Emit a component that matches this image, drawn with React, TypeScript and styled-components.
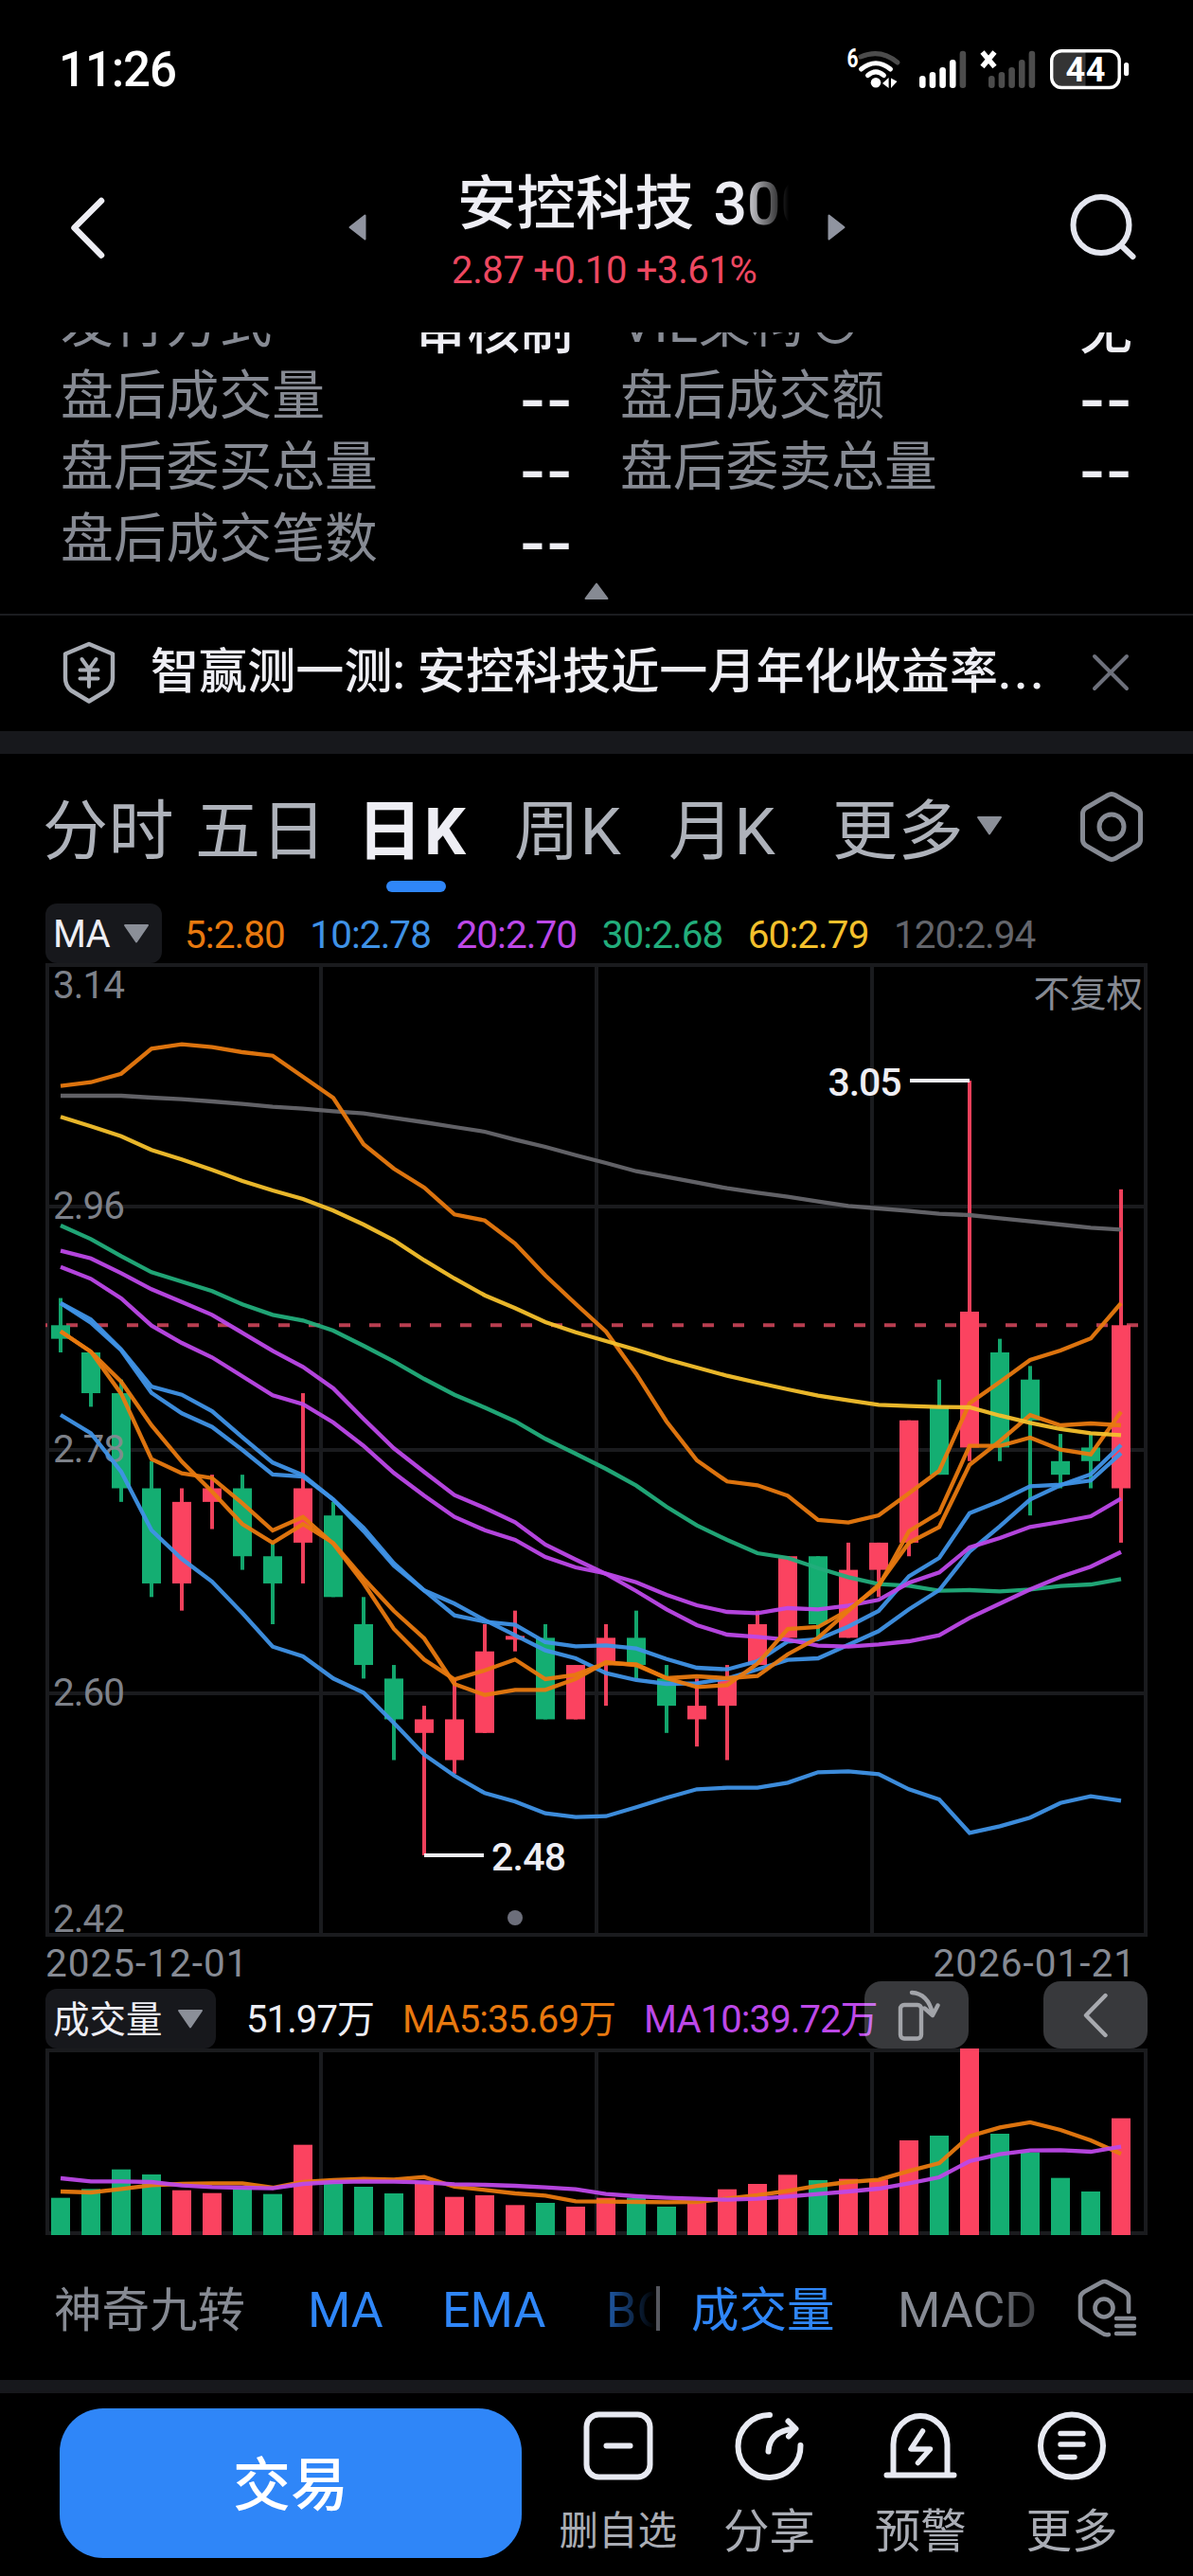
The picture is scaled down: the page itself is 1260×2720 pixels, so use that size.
import React from "react";
import styled, { createGlobalStyle } from "styled-components";

const RED = "#fb4360";
const GREEN = "#14ae72";
const ORANGE = "#e8790f";
const BLUE = "#3f92e6";
const PURPLE = "#bd48e8";
const TEAL = "#22ad7b";
const YELLOW = "#f4c02c";
const SLATE = "#66666c";
const GRID = "#1a1b1e";
const PANEL = "#17181c";
const MUTED = "#868a93";
const BRIGHT = "#eeeef4";
const ACCENT = "#2f86f8";

const FONT = `Roboto, "Noto Sans CJK SC", sans-serif`;

const GlobalStyle = createGlobalStyle`
  * { box-sizing: border-box; }
  body { margin: 0; background: #000; }
`;

const Screen = styled.div`
  width: 1260px;
  height: 2720px;
  overflow: hidden;
  display: flex;
  flex-direction: column;
  background: #000;
  color: ${BRIGHT};
  font-family: ${FONT};
`;

const Svg = styled.svg`
  display: block;
  flex: none;
  text { font-family: ${FONT}; }
`;

const ChartSvg = styled(Svg)`
  margin-left: 48px;
`;

const Label = styled.span<{
  $size: number;
  $color?: string;
  $weight?: number;
  $ls?: number;
  $lh?: number;
  $drop?: number;
}>`
  display: block;
  flex: none;
  white-space: nowrap;
  font-size: ${(p) => p.$size}px;
  color: ${(p) => p.$color || BRIGHT};
  font-weight: ${(p) => p.$weight || 400};
  letter-spacing: ${(p) => p.$ls || 0}px;
  line-height: ${(p) => p.$lh || 60}px;
  padding-top: ${(p) => p.$drop || 0}px;
`;

/* ---------- status bar ---------- */

const StatusRow = styled.header`
  flex: none;
  height: 146px;
  padding: 0 62px 0 62px;
  display: flex;
  align-items: center;
  justify-content: space-between;
`;

const BARS = [79, 75, 70, 62, 52.7];

function Signal({ x, lit }: { x: number; lit: number }) {
  return (
    <g>
      {BARS.map((top, i) => (
        <rect key={i} x={x + i * 10.65} y={top} width={6.6} height={92 - top} rx={3.2} fill={i < lit ? "#fff" : "#4c4c4c"} />
      ))}
    </g>
  );
}

function StatusBar() {
  return (
    <StatusRow>
      <Label $size={51} $weight={500} $ls={-1.1} $drop={2} $color="#fff">11:26</Label>
      <Svg width="310" height="56" viewBox="888 44 310 56">
        <text x="894.5" y="70" fontSize="27" fontWeight="700" textLength="12" lengthAdjust="spacingAndGlyphs" fill="#fff">6</text>
        <path d="M909 59Q930 50 948 65" fill="none" stroke="#4c4c4c" strokeWidth="5" strokeLinecap="round" />
        <path d="M909.5 72Q925 59.5 940.5 72" fill="none" stroke="#fff" strokeWidth="5" strokeLinecap="round" />
        <path d="M916.5 78.6Q925 71 933.5 78.6" fill="none" stroke="#fff" strokeWidth="5" strokeLinecap="round" />
        <circle cx="925" cy="86.3" r="5.3" fill="#fff" />
        <path d="M932 87l6.6-6v11zM941 81.500l6.500 3.500-6.500 7z" fill="#fff" />
        <Signal x={971} lit={4} />
        <Signal x={1044} lit={0} />
        <path d="M1037.500 54l13 15.500M1050.500 54l-13 15.500" stroke="#fff" strokeWidth="5.500" />
        <path d="M1119 54h27.500v36h-27.500a8 8 0 0 1-8-8v-20a8 8 0 0 1 8-8z" fill="#343434" />
        <rect x="1110.700" y="52.700" width="71.500" height="38.800" rx="10.500" fill="none" stroke="#fff" strokeWidth="3.400" />
        <rect x="1187" y="65" width="5.200" height="14" rx="2.600" fill="#fff" />
        <text x="1125.500" y="85" fontSize="36" fontWeight="700" textLength="42" fill="#fff">44</text>
      </Svg>
    </StatusRow>
  );
}

/* ---------- title bar ---------- */

const TitleRow = styled.nav`
  flex: none;
  height: 205px;
  padding: 0 58px 17px 72px;
  display: flex;
  align-items: center;
`;

const PrevSlot = styled.div`
  width: 315px;
  display: flex;
  justify-content: space-between;
  align-items: center;
`;

const TitleColumn = styled.div`
  width: 487px;
  padding: 11px 0 0 90px;
`;

const TitleClip = styled.div`
  width: 357px;
  margin-left: 6px;
  word-spacing: 5px;
  overflow: hidden;
  mask-image: linear-gradient(90deg, #000 300px, transparent 350px);
`;

const SearchSlot = styled.div`
  flex: 1;
  display: flex;
  justify-content: flex-end;
`;

function TitleBar() {
  return (
    <TitleRow>
      <PrevSlot>
        <Svg width="42" height="70" viewBox="72 205 42 70">
          <path d="M107 212L78.500 240.500L107 269.500" fill="none" stroke={BRIGHT} strokeWidth="6.500" strokeLinecap="round" strokeLinejoin="round" />
        </Svg>
        <Svg width="19" height="28" viewBox="0 0 19 28">
          <path d="M17.500 1.500v25L1.500 14z" fill="#9094a0" stroke="#9094a0" strokeWidth="2" strokeLinejoin="round" />
        </Svg>
      </PrevSlot>
      <TitleColumn>
        <TitleClip>
          <Label $size={62.5} $weight={500} $lh={80}>安控科技 300370</Label>
        </TitleClip>
        <Label $size={40} $lh={59} $ls={-0.35} $color="#ee4861">2.87 +0.10 +3.61%</Label>
      </TitleColumn>
      <Svg width="19" height="28" viewBox="0 0 19 28">
        <path d="M1.500 1.500v25L17.500 14z" fill="#9094a0" stroke="#9094a0" strokeWidth="2" strokeLinejoin="round" />
      </Svg>
      <SearchSlot>
        <Svg width="74" height="76" viewBox="1128 203 74 76">
          <circle cx="1163" cy="238.500" r="29.500" fill="none" stroke="#e4e6ef" strokeWidth="6" />
          <path d="M1185 261l11.500 11" stroke="#e4e6ef" strokeWidth="6" strokeLinecap="round" />
        </Svg>
      </SearchSlot>
    </TitleRow>
  );
}

/* ---------- quote table ---------- */

const QuoteSection = styled.section`
  flex: none;
  height: 297px;
  overflow: hidden;
  display: flex;
  flex-direction: column;
  align-items: center;
`;

const QuoteGrid = styled.div`
  flex: none;
  width: 1132px;
  margin-top: -47px;
  margin-bottom: 7px;
  display: grid;
  grid-template-columns: 541px 541px;
  column-gap: 50px;
  grid-auto-rows: 75.7px;
`;

const QuoteCell = styled.div`
  display: flex;
  justify-content: space-between;
  align-items: center;
`;

const QuoteName = styled.div`
  display: flex;
  align-items: center;
  gap: 10px;
`;

const QuoteValue = styled.div`
  padding-top: 8px;
`;

const Dashes = styled.span`
  display: block;
  font-family: Inter, sans-serif;
  font-weight: 600;
  font-size: 61px;
  line-height: 60px;
  color: ${BRIGHT};
`;

const QUOTES: { name: string; value?: string; info?: boolean }[] = [
  { name: "发行方式", value: "审核制" },
  { name: "VIE架构", value: "无", info: true },
  { name: "盘后成交量" },
  { name: "盘后成交额" },
  { name: "盘后委买总量" },
  { name: "盘后委卖总量" },
  { name: "盘后成交笔数" },
];

function Quotes() {
  return (
    <QuoteSection>
      <QuoteGrid>
        {QUOTES.map((q) => (
          <QuoteCell key={q.name}>
            <QuoteName>
              <Label $size={55.8} $color={MUTED}>{q.name}</Label>
              {q.info && (
                <Svg width="46" height="46" viewBox="0 0 46 46">
                  <circle cx="23" cy="23" r="19" fill="none" stroke={MUTED} strokeWidth="4" />
                </Svg>
              )}
            </QuoteName>
            <QuoteValue>
              {q.value ? <Label $size={55.8} $weight={500} $drop={6}>{q.value}</Label> : <Dashes>--</Dashes>}
            </QuoteValue>
          </QuoteCell>
        ))}
      </QuoteGrid>
      <Svg width="28" height="20" viewBox="0 0 28 20">
        <path d="M14 2.500L25.500 18h-23z" fill={MUTED} stroke={MUTED} strokeWidth="2" strokeLinejoin="round" />
      </Svg>
    </QuoteSection>
  );
}

/* ---------- banner ---------- */

const BannerRow = styled.aside`
  flex: none;
  height: 124px;
  border-top: 2px solid #1b1c20;
  padding: 0 65px 3px 64px;
  display: flex;
  align-items: center;
`;

const BannerText = styled.div`
  flex: 1;
  display: flex;
  margin-left: 35px;
`;

const Band = styled.div<{ $h: number }>`
  flex: none;
  height: ${(p) => p.$h}px;
  background: ${PANEL};
`;

function Banner() {
  return (
    <BannerRow>
      <Svg width="60" height="66" viewBox="0 0 60 66">
        <path d="M30 3L55 13.500V39Q55 47 49 52L30 63.500L11 52Q5 47 5 39V13.500Z" fill="none" stroke="#a9adb5" strokeWidth="4.400" strokeLinejoin="round" />
        <path d="M22.500 19L30 29.500L37.500 19M30 29.500V48M20.500 30.500h19M20.500 39.500h19" fill="none" stroke="#a9adb5" strokeWidth="4" strokeLinecap="round" strokeLinejoin="round" />
      </Svg>
      <BannerText>
        <Label $size={51} $weight={500} $ls={0.1}>智赢测一测: 安控科技近一月年化收益率</Label>
        <Label $size={51} $weight={500} $ls={3}>...</Label>
      </BannerText>
      <Svg width="44" height="44" viewBox="0 0 44 44">
        <path d="M5 5l34 34M39 5l-34 34" stroke="#6d707b" strokeWidth="4" strokeLinecap="round" />
      </Svg>
    </BannerRow>
  );
}

/* ---------- period tabs ---------- */

const TabRow = styled.div`
  flex: none;
  height: 158px;
  padding: 0 52px 0 45px;
  display: flex;
  align-items: center;
`;

const Tab = styled.div<{ $w: number }>`
  position: relative;
  flex: none;
  width: ${(p) => p.$w}px;
  height: 158px;
  display: flex;
  align-items: center;
`;

const Underline = styled.div`
  position: absolute;
  left: 31px;
  bottom: 12px;
  width: 63px;
  height: 12px;
  border-radius: 6px;
  background: ${ACCENT};
`;

const TabCaret = styled.div`
  padding-bottom: 6px;
`;

const TabSettings = styled.div`
  margin-left: auto;
  padding-bottom: 4px;
`;

const TABS = [
  { text: "分时", w: 161 },
  { text: "五日", w: 171 },
  { text: "日K", w: 166, active: true },
  { text: "周K", w: 163 },
  { text: "月K", w: 173 },
  { text: "更多", w: 152 },
];

function Caret({ size = 28 }: { size?: number }) {
  return (
    <Svg width={size} height={22} viewBox="0 0 28 22">
      <path d="M2 2h24L14 19.500z" fill="#8b8f98" stroke="#8b8f98" strokeWidth="2" strokeLinejoin="round" />
    </Svg>
  );
}

function Tabs() {
  return (
    <TabRow>
      {TABS.map((t) => (
        <Tab key={t.text} $w={t.w}>
          <Label $size={69} $lh={90} $drop={7} $ls={t.active ? 2 : 0.6} $weight={t.active ? 700 : 400} $color={t.active ? BRIGHT : "#aeb2ba"}>{t.text}</Label>
          {t.active && <Underline />}
        </Tab>
      ))}
      <TabCaret>
        <Caret />
      </TabCaret>
      <TabSettings>
        <Svg width="68" height="76" viewBox="1140 835 68 76">
          <path d="M1174 838.500Q1176 838.500 1178 839.700L1201 853Q1204.500 855.500 1204.500 859V887Q1204.500 890.500 1201 893L1178 906.300Q1174 908.500 1170 906.300L1147 893Q1143.500 890.500 1143.500 887V859Q1143.500 855.500 1147 853L1170 839.700Q1172 838.500 1174 838.500Z" fill="none" stroke={MUTED} strokeWidth="5" />
          <circle cx="1174" cy="873" r="13" fill="none" stroke={MUTED} strokeWidth="5" />
        </Svg>
      </TabSettings>
    </TabRow>
  );
}

/* ---------- legend rows ---------- */

const LegendRow = styled.div`
  flex: none;
  height: 63px;
  padding-left: 48px;
  display: flex;
  align-items: center;
`;

const Pill = styled.div<{ $w: number }>`
  flex: none;
  width: ${(p) => p.$w}px;
  height: 63px;
  padding: 0 13px 0 8px;
  border-radius: 12px;
  background: ${PANEL};
  display: flex;
  align-items: center;
  justify-content: space-between;
`;

const LegendItems = styled.div<{ $gap: number; $ml: number }>`
  display: flex;
  gap: ${(p) => p.$gap}px;
  margin-left: ${(p) => p.$ml}px;
`;

const MA_LEGEND = [
  { text: "5:2.80", color: ORANGE },
  { text: "10:2.78", color: BLUE },
  { text: "20:2.70", color: PURPLE },
  { text: "30:2.68", color: TEAL },
  { text: "60:2.79", color: YELLOW },
  { text: "120:2.94", color: "#63656b" },
];

/* ---------- candlestick chart ---------- */

const px = (price: number) => 1141 + (3.05 - price) * 1435;
const cx = (i: number) => 64 + i * 32;

// [up, high, body top, body bottom, low]
const CANDLES: [number, number, number, number, number][] = [
  [0, 2.89, 2.87, 2.86, 2.85],
  [0, 2.85, 2.85, 2.82, 2.81],
  [0, 2.83, 2.82, 2.75, 2.74],
  [0, 2.77, 2.75, 2.68, 2.67],
  [1, 2.75, 2.74, 2.68, 2.66],
  [1, 2.76, 2.75, 2.74, 2.72],
  [0, 2.76, 2.75, 2.7, 2.69],
  [0, 2.71, 2.7, 2.68, 2.65],
  [1, 2.82, 2.75, 2.71, 2.68],
  [0, 2.74, 2.73, 2.67, 2.67],
  [0, 2.67, 2.65, 2.62, 2.61],
  [0, 2.62, 2.61, 2.58, 2.55],
  [1, 2.59, 2.58, 2.57, 2.48],
  [1, 2.61, 2.58, 2.55, 2.54],
  [1, 2.65, 2.63, 2.57, 2.57],
  [1, 2.66, 2.64, 2.64, 2.63],
  [0, 2.65, 2.64, 2.58, 2.58],
  [1, 2.62, 2.62, 2.58, 2.58],
  [1, 2.65, 2.64, 2.62, 2.59],
  [0, 2.66, 2.64, 2.62, 2.61],
  [0, 2.62, 2.61, 2.59, 2.57],
  [1, 2.61, 2.59, 2.58, 2.56],
  [1, 2.62, 2.61, 2.59, 2.55],
  [1, 2.66, 2.65, 2.62, 2.62],
  [1, 2.7, 2.7, 2.64, 2.64],
  [0, 2.7, 2.7, 2.65, 2.64],
  [1, 2.71, 2.69, 2.64, 2.64],
  [1, 2.71, 2.71, 2.69, 2.67],
  [1, 2.8, 2.8, 2.71, 2.7],
  [0, 2.83, 2.81, 2.76, 2.76],
  [1, 3.05, 2.88, 2.78, 2.77],
  [0, 2.86, 2.85, 2.78, 2.77],
  [0, 2.84, 2.83, 2.8, 2.73],
  [0, 2.79, 2.77, 2.76, 2.75],
  [0, 2.79, 2.78, 2.77, 2.75],
  [1, 2.97, 2.87, 2.75, 2.71],
];

const LINES: { color: string; ys: number[] }[] = [
  { color: SLATE, ys: [1157, 1157, 1157, 1159, 1160.7, 1163, 1165.7, 1168.7, 1170.7, 1173.3, 1175.7, 1180.3, 1185, 1190, 1195, 1203.3, 1211, 1219.7, 1228, 1236.7, 1242.7, 1248.7, 1254.7, 1259.3, 1263.7, 1268.7, 1273.3, 1276, 1278.7, 1281.7, 1283, 1286.3, 1289.7, 1293, 1296.3, 1298.3] },
  { color: TEAL, ys: [1294, 1308.3, 1326.3, 1343.3, 1353.3, 1363.3, 1377.3, 1388.3, 1394.3, 1405, 1421, 1437.7, 1456, 1472.7, 1486.3, 1500.7, 1519.3, 1535, 1551, 1568.7, 1591, 1610.7, 1626, 1640, 1645, 1655.7, 1665.3, 1672.7, 1674.3, 1679.7, 1679, 1680.3, 1678.3, 1674.7, 1673, 1667.3] },
  { color: BLUE, ys: [1376, 1393.3, 1425, 1464, 1472.7, 1490, 1517.7, 1544.3, 1557.7, 1583.5, 1613.3, 1650.7, 1679.3, 1705.7, 1712.3, 1715.7, 1734, 1738.3, 1737.3, 1740.7, 1751.7, 1761, 1762.7, 1754, 1733.3, 1731, 1717.5, 1701, 1664.3, 1645, 1597.7, 1585, 1569.3, 1567.7, 1563.3, 1534.3] },
  { color: BLUE, ys: [1376, 1396.7, 1425.7, 1470.7, 1492.3, 1506.7, 1531, 1557, 1559, 1583.3, 1616.7, 1653.3, 1679.3, 1693.3, 1710.7, 1726.7, 1742.7, 1751, 1766.7, 1774, 1778, 1777.3, 1772.3, 1762.7, 1752.7, 1751, 1736.7, 1722.3, 1699.3, 1679, 1638.3, 1611.7, 1583.3, 1568.3, 1556.7, 1525.7] },
  { color: BLUE, ys: [1494, 1513.3, 1554, 1615.7, 1646, 1670, 1703.3, 1738.7, 1749, 1772.3, 1787.3, 1819.3, 1852.7, 1875, 1893.3, 1902.3, 1914.7, 1918.7, 1917.7, 1908.3, 1898.3, 1889.3, 1887.7, 1887.7, 1882.3, 1871.3, 1870.3, 1873.3, 1889.3, 1900, 1935.3, 1928.3, 1919.3, 1903.7, 1896.7, 1901.3] },
  { color: PURPLE, ys: [1320.7, 1328.7, 1344.3, 1361.3, 1374.7, 1388.3, 1407.3, 1426.3, 1443.3, 1466, 1498.3, 1529.3, 1554.3, 1578.7, 1592.3, 1607.3, 1631, 1646.7, 1662, 1680, 1699.3, 1716, 1726, 1728.3, 1731.3, 1737.7, 1738.7, 1736.3, 1733, 1726.7, 1708.3, 1693.3, 1678.3, 1665, 1654.3, 1638.7] },
  { color: PURPLE, ys: [1337.7, 1350.3, 1371, 1399.7, 1418, 1433.3, 1453.3, 1473.3, 1482.7, 1502, 1526.7, 1555.3, 1579.3, 1601.7, 1615.7, 1626, 1644, 1655, 1661.5, 1670.7, 1684, 1695, 1702, 1703.3, 1698, 1699.3, 1695.3, 1689.3, 1671.3, 1660.3, 1634, 1624, 1612.3, 1607, 1601, 1582.3] },
  { color: ORANGE, ys: [1146.7, 1142.7, 1133.7, 1107.3, 1102.7, 1105.7, 1111, 1114.7, 1137, 1159.3, 1208.3, 1234, 1254, 1282.3, 1288.7, 1313, 1346.7, 1376.7, 1406, 1450.7, 1501, 1542, 1564.3, 1568.3, 1579.3, 1605, 1607.7, 1600, 1576.7, 1553, 1481.7, 1459.3, 1436, 1426, 1413.3, 1376] },
  { color: ORANGE, ys: [1405.7, 1427.3, 1471.7, 1540.7, 1555.7, 1560.7, 1587.3, 1616, 1601.7, 1630, 1671.7, 1720, 1752.3, 1773.3, 1763.7, 1752.3, 1773, 1768.3, 1756, 1757.3, 1772, 1781.3, 1779.3, 1756.7, 1720, 1718, 1700, 1675, 1616.7, 1597.3, 1526.7, 1526.7, 1518, 1530.7, 1535.7, 1490.7] },
  { color: ORANGE, ys: [1405.7, 1427.3, 1459, 1505, 1543.3, 1575, 1609.3, 1629, 1609.3, 1629.3, 1666.7, 1701, 1730, 1778.3, 1789.7, 1784.3, 1784.3, 1772.7, 1755, 1758.3, 1772, 1770, 1772, 1769.7, 1746.7, 1729.3, 1701, 1673.3, 1629, 1612.3, 1546.7, 1521.7, 1494.3, 1505, 1503, 1505] },
  { color: YELLOW, ys: [1179.3, 1189.3, 1199.7, 1214.3, 1224.3, 1235.3, 1247, 1257, 1266, 1278.3, 1293, 1309.7, 1330.7, 1350, 1367.7, 1381.3, 1396, 1406.7, 1416, 1425.3, 1435.3, 1444, 1452.7, 1460, 1467, 1473.7, 1478.7, 1483.3, 1484.7, 1485.7, 1486, 1494.7, 1502.3, 1509, 1513.3, 1515.3] },
];

const points = (ys: number[]) => ys.map((y, i) => `${cx(i)},${y}`).join(" ");

const PRICE_LABELS: [string, number][] = [
  ["3.14", 1054],
  ["2.96", 1287],
  ["2.78", 1544],
  ["2.60", 1801],
  ["2.42", 2040],
];

function PriceChart() {
  return (
    <ChartSvg width="1164" height="1028" viewBox="48 1017 1164 1028">
      <g stroke={GRID} strokeWidth="4" fill="none">
        <rect x="50" y="1019" width="1160" height="1024" />
        <path d="M339 1019V2043M630 1019V2043M921 1019V2043M50 1274H1210M50 1531H1210M50 1788H1210" />
      </g>
      <path d="M38 1399.300H1204" stroke="#b83e50" strokeWidth="4" strokeDasharray="12 20" />
      {CANDLES.map(([up, hi, top, bot, lo], i) => {
        const fill = up ? RED : GREEN;
        const h = px(bot) - px(top);
        return (
          <g key={i} fill={fill}>
            <rect x={cx(i) - 2} y={px(hi)} width={4} height={px(lo) - px(hi)} opacity={0.95} />
            <rect x={cx(i) - 10} y={h ? px(top) : px(top) - 2} width={20} height={h || 4} />
          </g>
        );
      })}
      <g fill={MUTED} fillOpacity="0.95" fontSize="40.500">
        {PRICE_LABELS.map(([t, y]) => (
          <text key={t} x="56" y={y} textLength="76">{t}</text>
        ))}
      </g>
      {LINES.map((l, i) => (
        <polyline key={i} points={points(l.ys)} fill="none" stroke={l.color} strokeWidth="4.300" strokeOpacity="0.95" />
      ))}
      <g fill={BRIGHT} fontSize="41" fontWeight="500">
        <rect x="961" y="1139" width="63" height="4" />
        <text x="874.500" y="1157" textLength="78">3.05</text>
        <rect x="448" y="1957" width="63" height="4" />
        <text x="519" y="1975" textLength="79">2.48</text>
      </g>
      <text x="1207" y="1063" textAnchor="end" fontSize="38.500" fill={MUTED}>不复权</text>
      <circle cx="544" cy="2025" r="8" fill="#6c6e7a" />
    </ChartSvg>
  );
}

const DateRow = styled.div`
  flex: none;
  height: 47px;
  padding: 9px 60px 0 48px;
  display: flex;
  justify-content: space-between;
  align-items: center;
`;

/* ---------- volume ---------- */

const VolumeHead = styled.div`
  position: relative;
  flex: none;
  height: 71px;
  padding-left: 48px;
  display: flex;
  align-items: flex-end;
`;

const FloatingButtons = styled.div`
  position: absolute;
  top: 0;
  right: 48px;
  display: flex;
  gap: 79px;
`;

const FloatingButton = styled.div`
  width: 110px;
  height: 71px;
  border-radius: 18px;
  background: rgba(236, 240, 252, 0.24);
  display: flex;
  align-items: center;
  justify-content: center;
`;

const VOLUME_TOPS = [752, 724, 662, 678, 728, 737, 722, 740, 584, 705, 717, 738, 700, 749, 744, 775, 768, 780, 752, 752, 780, 768, 725, 708, 679, 696, 692, 694, 570, 555, 279, 549, 608, 689, 732, 500];
const VOLUME_MA5 = [732, 735, 724, 712, 708, 706, 706, 720, 702, 696, 692, 694, 686, 717, 727, 738, 745, 763, 764, 765, 766, 765, 754, 744, 730, 714, 702, 695, 667, 642, 557, 529, 513, 537, 570, 613];
const VOLUME_MA10 = [690, 700, 700, 702, 713, 718, 720, 722, 708, 702, 700, 701, 703, 709, 711, 714, 719, 725, 740, 747, 752, 755, 758, 755, 748, 740, 732, 723, 706, 687, 636, 614, 602, 601, 606, 590];
const vy = (v: number) => 2070 + v / 3;

function VolumeChart() {
  return (
    <ChartSvg width="1164" height="198" viewBox="48 2163 1164 198">
      <g stroke={GRID} strokeWidth="4" fill="none">
        <rect x="50" y="2165" width="1160" height="193" />
        <path d="M339 2165V2358M630 2165V2358M921 2165V2358" />
      </g>
      {VOLUME_TOPS.map((t, i) => (
        <rect key={i} x={cx(i) - 10} y={vy(t)} width={20} height={2360 - vy(t)} fill={CANDLES[i][0] ? RED : GREEN} />
      ))}
      <polyline points={points(VOLUME_MA5.map(vy))} fill="none" stroke={ORANGE} strokeWidth="4.300" strokeOpacity="0.95" />
      <polyline points={points(VOLUME_MA10.map(vy))} fill="none" stroke={PURPLE} strokeWidth="4.300" strokeOpacity="0.95" />
    </ChartSvg>
  );
}

/* ---------- indicator strip ---------- */

const IndicatorRow = styled.div`
  flex: none;
  height: 152px;
  padding: 5px 56px 0 57px;
  display: flex;
  align-items: center;
`;

const MainIndicators = styled.div`
  flex: none;
  width: 636px;
  display: flex;
  overflow: hidden;
  mask-image: linear-gradient(90deg, #000 560px, transparent 634px);
`;

const SubIndicators = styled.div`
  flex: none;
  width: 402px;
  padding-left: 33px;
  display: flex;
  overflow: hidden;
  mask-image: linear-gradient(90deg, #000 340px, rgba(0, 0, 0, 0.4) 400px);
`;

const Indicator = styled.div<{ $w: number }>`
  flex: none;
  width: ${(p) => p.$w}px;
`;

const Separator = styled.div`
  width: 4px;
  height: 47px;
  margin-bottom: 4px;
  background: #55575e;
`;

const IndicatorSettings = styled.div`
  margin-left: auto;
  padding-bottom: 5px;
`;

function Indicators() {
  return (
    <IndicatorRow>
      <MainIndicators>
        <Indicator $w={268}><Label $size={50.5} $color={MUTED}>神奇九转</Label></Indicator>
        <Indicator $w={142}><Label $size={52} $color={ACCENT}>MA</Label></Indicator>
        <Indicator $w={173}><Label $size={52} $color={ACCENT}>EMA</Label></Indicator>
        <Indicator $w={120}><Label $size={52} $color={ACCENT}>BOLL</Label></Indicator>
      </MainIndicators>
      <Separator />
      <SubIndicators>
        <Indicator $w={218}><Label $size={50.5} $color={ACCENT}>成交量</Label></Indicator>
        <Label $size={52} $color={MUTED}>MACD</Label>
      </SubIndicators>
      <IndicatorSettings>
        <Svg width="68" height="66" viewBox="1136 2404 68 66">
          <path d="M1171 2465Q1167 2466 1163 2463L1145 2452Q1141 2449.500 1141 2446V2426Q1141 2422.500 1145 2420L1163 2410Q1166.500 2408 1170 2410L1188 2420Q1192 2422.500 1192 2426V2441" fill="none" stroke={MUTED} strokeWidth="4.600" strokeLinecap="round" />
          <circle cx="1166" cy="2437" r="9.500" fill="none" stroke={MUTED} strokeWidth="4.600" />
          <path d="M1179 2448h19M1179 2456h19M1179 2464h19" stroke={MUTED} strokeWidth="4.400" strokeLinecap="round" />
        </Svg>
      </IndicatorSettings>
    </IndicatorRow>
  );
}

/* ---------- bottom bar ---------- */

const BottomBar = styled.footer`
  flex: none;
  height: 193px;
  padding: 16px 48px 0 63px;
  display: flex;
`;

const TradeButton = styled.button`
  flex: none;
  width: 488px;
  height: 158px;
  border: 0;
  padding: 5px 0 0;
  border-radius: 46px;
  background: ${ACCENT};
  color: #fff;
  font: 500 61px/152px ${FONT};
  margin-right: 22px;
`;

const Action = styled.div`
  flex: none;
  width: 159.7px;
  display: flex;
  flex-direction: column;
  align-items: center;
`;

function Actions() {
  const s = { fill: "none", stroke: "#e8eaf2", strokeWidth: 5.4, strokeLinecap: "round" as const, strokeLinejoin: "round" as const };
  return (
    <>
      <Action>
        <Svg width="80" height="80" viewBox="0 0 80 80">
          <rect x="6.500" y="6.500" width="67" height="66" rx="13" {...s} strokeWidth={6} />
          <path d="M27.500 39.500h25" {...s} strokeWidth={6} />
        </Svg>
        <Label $size={41.5} $lh={95} $drop={2} $color="#aaadb5">删自选</Label>
      </Action>
      <Action>
        <Svg width="80" height="80" viewBox="0 0 80 80">
          <path d="M40 7A33 33 0 1 0 72.500 39" {...s} strokeWidth={6} />
          <path d="M38.500 45.500Q39.500 24 66 21.500M59.500 13.500L67.500 21.500L60 29.500" {...s} strokeWidth={6} />
        </Svg>
        <Label $size={48.5} $lh={95} $drop={3} $color="#aaadb5">分享</Label>
      </Action>
      <Action>
        <Svg width="80" height="80" viewBox="0 0 80 80">
          <path d="M11.500 70V38a28.500 30 0 0 1 57 0V70M4.500 70.500H75.500" {...s} strokeWidth={6} />
          <path d="M42.500 24L30 43H50.500L37.500 57.500" {...s} strokeWidth={5.5} />
        </Svg>
        <Label $size={48.5} $lh={95} $drop={3} $color="#aaadb5">预警</Label>
      </Action>
      <Action>
        <Svg width="80" height="80" viewBox="0 0 80 80">
          <circle cx="40" cy="39.500" r="33" {...s} strokeWidth={6} />
          <path d="M28 26.500h24M28 38h24M28 51.500h15" {...s} />
        </Svg>
        <Label $size={48.5} $lh={95} $drop={3} $color="#aaadb5">更多</Label>
      </Action>
    </>
  );
}

export default function App() {
  return (
    <>
      <GlobalStyle />
      <Screen>
        <StatusBar />
        <TitleBar />
        <Quotes />
        <Banner />
        <Band $h={24} />
        <Tabs />
        <LegendRow>
          <Pill $w={123}>
            <Label $size={40} $ls={-0.8} $drop={3}>MA</Label>
            <Caret />
          </Pill>
          <LegendItems $gap={26.5} $ml={24}>
            {MA_LEGEND.map((m) => (
              <Label key={m.text} $size={40.5} $ls={-0.95} $drop={3} $color={m.color}>{m.text}</Label>
            ))}
          </LegendItems>
        </LegendRow>
        <PriceChart />
        <DateRow>
          <Label $size={40.5} $lh={47} $ls={1} $color={MUTED}>2025-12-01</Label>
          <Label $size={40.5} $lh={47} $ls={1} $color={MUTED}>2026-01-21</Label>
        </DateRow>
        <VolumeHead>
          <Pill $w={180}>
            <Label $size={38.5} $drop={2}>成交量</Label>
            <Caret />
          </Pill>
          <LegendItems $gap={30} $ml={32}>
            <Label $size={40} $ls={-0.9}>51.97万</Label>
            <Label $size={40} $ls={-0.9} $color={ORANGE}>MA5:35.69万</Label>
            <Label $size={40} $ls={-0.9} $color={PURPLE}>MA10:39.72万</Label>
          </LegendItems>
          <FloatingButtons>
            <FloatingButton>
              <Svg width="50" height="56" viewBox="0 0 50 56">
                <rect x="8" y="17" width="22" height="35.500" rx="4" fill="none" stroke="#a2a4a9" strokeWidth="4.400" />
                <path d="M20 4Q37 5 42 26M33.500 20.500L42 28L47.500 17.500" fill="none" stroke="#a2a4a9" strokeWidth="4.400" strokeLinecap="round" strokeLinejoin="round" />
              </Svg>
            </FloatingButton>
            <FloatingButton>
              <Svg width="30" height="48" viewBox="0 0 30 48">
                <path d="M25.500 3L5 24L25.500 45" fill="none" stroke="#a8aaaf" strokeWidth="4.400" strokeLinecap="round" strokeLinejoin="round" />
              </Svg>
            </FloatingButton>
          </FloatingButtons>
        </VolumeHead>
        <VolumeChart />
        <Indicators />
        <Band $h={14} />
        <BottomBar>
          <TradeButton>交易</TradeButton>
          <Actions />
        </BottomBar>
      </Screen>
    </>
  );
}
